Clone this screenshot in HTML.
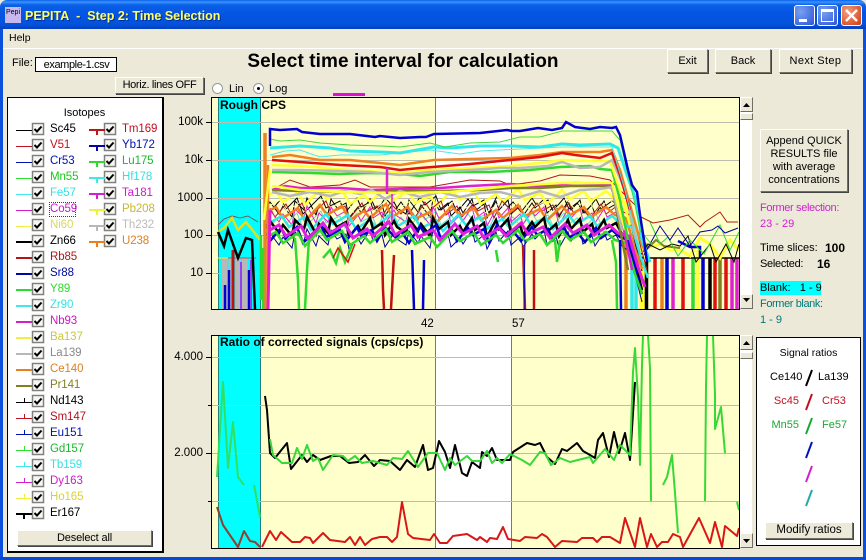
<!DOCTYPE html>
<html><head><meta charset="utf-8"><style>
html,body{margin:0;padding:0}
body{width:866px;height:560px;overflow:hidden;position:relative;background:#ECE9D8;font:11px "Liberation Sans",sans-serif;color:#000}
div,span{position:absolute;white-space:nowrap}
.b{background:#ECE9D8;border:1px solid;border-color:#fff #716F64 #716F64 #fff;box-shadow:1px 1px 0 #444;text-align:center;box-sizing:border-box}
.t{line-height:16px;height:16px}
.sb{position:absolute;left:740px;width:12px;background:#fff}
.ar{left:740px;width:13px;height:15px;background:#ECE9D8;border:1px solid;border-color:#fff #716F64 #716F64 #fff;box-sizing:border-box}
.g{font-size:11.5px;line-height:14px}
</style></head><body>
<svg width="0" height="0" style="position:absolute"><defs>
<path id="ck" d="M2.500 6 L5 8.500 L9.500 3.500" fill="none" stroke="#000" stroke-width="2"/>
<path id="nA" fill="none" d="M265 0L270 9 281-4 286 6 297-5 303 11 313 1 321-7 326 5 340-2 345 10 357-5 361 4 372-2 377 9 385-5 396 6 401-1 409 11 420-6 425 2 436-7 441 7 452-2 457 9 468-4 473 3 484-3 489 10 497-7 508 4 513-1 521 9 532-5 537 3 548-3 553 8 564-5 569 6 577 0 585 10 596-4 601 6 612-2 620 5 628 8 636 40 642 62"/>
<path id="nB" fill="none" d="M265 3L270-5 279 7 283-1 292 10 295-6 304 3 307-9 316 8 319-2 328 7 331-8 337 1 346-4 349 11 358 0 361 6 370-8 373 3 382-3 385 9 394-5 397 1 406 7 409-7 418 5 421-2 430 10 433-8 439 3 448-4 451 9 460 0 463 6 472-8 475 4 484-3 487 11 496-6 499 3 508-7 511 7 520-1 523 9 532-4 535 1 544-8 547 6 556-2 559 10 568-6 571 3 580-7 583 6 592-2 595 8 604-6 607 2 616-3 622 8 630 14 637 44 642 64"/>
<path id="nC" fill="none" d="M265 0L276-6 283 5 298-5 305 8 320-8 327 2 342-7 350 7 364-2 370 5 386-9 392 4 408-6 415 6 430-1 437 9 452-7 460 3 474-5 481 7 496-3 503 5 518-8 525 3 540-4 547 7 562-7 570 2 584-6 591 4 606-6 615 2 626 5 635 36 642 56"/>
</defs></svg>

<!-- title bar -->
<div style="left:0;top:0;width:866px;height:29px;border-radius:7px 7px 0 0;background:linear-gradient(#0A5FE8 0,#3A93FF 2px,#0A60E6 5px,#0554E4 14px,#0453DC 24px,#0240C0 29px)"></div>
<div style="left:5px;top:7px;width:16px;height:16px;background:#C8B8F0;font-size:7px;line-height:12px;color:#000;text-align:center">Pepi</div>
<div style="left:25px;top:7px;font:bold 12.5px/18px 'Liberation Sans',sans-serif;color:#FFFF66;text-shadow:1px 1px 0 #0030A0">PEPITA&nbsp; -&nbsp; Step 2: Time Selection</div>
<div style="left:794px;top:5px;width:21px;height:21px;border-radius:3px;border:1px solid #fff;box-sizing:border-box;background:radial-gradient(circle at 30% 30%,#7AA0F0,#2A55D8)"><div style="left:4px;top:13px;width:8px;height:3px;background:#fff"></div></div>
<div style="left:817px;top:5px;width:21px;height:21px;border-radius:3px;border:1px solid #fff;box-sizing:border-box;background:radial-gradient(circle at 30% 30%,#7AA0F0,#2A55D8)"><div style="left:3px;top:3px;width:13px;height:13px;border:1px solid #fff;border-top:3px solid #fff;box-sizing:border-box"></div></div>
<div style="left:841px;top:5px;width:21px;height:21px;border-radius:3px;border:1px solid #fff;box-sizing:border-box;background:radial-gradient(circle at 30% 30%,#F0A080,#D03A10)"><svg style="position:absolute;left:3px;top:3px" width="13" height="13"><path d="M1 1L12 12M12 1L1 12" stroke="#fff" stroke-width="2.400"/></svg></div>
<!-- window border -->
<div style="left:0;top:29px;width:3px;height:531px;background:#0A50DC"></div>
<div style="left:863px;top:29px;width:3px;height:531px;background:#0A50DC"></div>
<div style="left:0;top:557px;width:866px;height:3px;background:#0A48D0"></div>
<!-- menu -->
<div style="left:9px;top:30px;font-size:10.5px" class="t">Help</div>
<div style="left:3px;top:48px;width:860px;height:1px;background:#fff"></div>
<!-- header row -->
<div style="left:12px;top:55px" class="t">File:</div>
<div style="left:35px;top:57px;width:82px;height:15px;box-sizing:border-box;background:#fff;border:1px solid #000;text-align:center;line-height:14px;letter-spacing:-.4px;padding-left:1px">example-1.csv</div>
<div style="left:204px;top:50px;width:398px;text-align:center;font:bold 19px/24px 'Liberation Sans',sans-serif;letter-spacing:.08px">Select time interval for calculation</div>
<div class="b" style="left:667px;top:49px;width:41px;height:24px;line-height:22px">Exit</div>
<div class="b" style="left:715px;top:49px;width:56px;height:24px;line-height:22px">Back</div>
<div class="b" style="left:779px;top:49px;width:73px;height:24px;line-height:22px;letter-spacing:.4px">Next Step</div>
<div class="b" style="left:115px;top:77px;width:89px;height:17px;line-height:15px;letter-spacing:-.35px">Horiz. lines OFF</div>
<div style="left:212px;top:83px;width:11px;height:11px;border-radius:50%;background:#fff;border:1px solid #999;box-sizing:border-box"></div>
<div style="left:229px;top:81px" class="t">Lin</div>
<div style="left:253px;top:83px;width:11px;height:11px;border-radius:50%;background:#fff;border:1px solid #999;box-sizing:border-box"><div style="left:3px;top:3px;width:3px;height:3px;border-radius:50%;background:#000"></div></div>
<div style="left:269px;top:81px" class="t">Log</div>
<div style="left:333px;top:93px;width:32px;height:3px;background:#E010D0"></div>

<!-- isotopes panel -->
<div style="left:7px;top:97px;width:157px;height:456px;box-sizing:border-box;background:#fff;border:1px solid #000;border-right-width:2px;border-bottom-width:2px"></div>
<div style="left:7px;top:105px;width:155px;text-align:center" class="t">Isotopes</div>
<svg style="position:absolute;left:0;top:0" width="170" height="560">
<g fill="#F8F8F2" stroke="#808080" stroke-width="1.500">
<rect x="32.500" y="123.500" width="11" height="11"/><rect x="32.500" y="139.500" width="11" height="11"/><rect x="32.500" y="155.500" width="11" height="11"/><rect x="32.500" y="171.500" width="11" height="11"/><rect x="32.500" y="187.500" width="11" height="11"/><rect x="32.500" y="203.500" width="11" height="11"/><rect x="32.500" y="219.500" width="11" height="11"/><rect x="32.500" y="235.500" width="11" height="11"/><rect x="32.500" y="251.500" width="11" height="11"/><rect x="32.500" y="267.500" width="11" height="11"/><rect x="32.500" y="283.500" width="11" height="11"/><rect x="32.500" y="299.500" width="11" height="11"/><rect x="32.500" y="315.500" width="11" height="11"/><rect x="32.500" y="331.500" width="11" height="11"/><rect x="32.500" y="347.500" width="11" height="11"/><rect x="32.500" y="363.500" width="11" height="11"/><rect x="32.500" y="379.500" width="11" height="11"/><rect x="32.500" y="395.500" width="11" height="11"/><rect x="32.500" y="411.500" width="11" height="11"/><rect x="32.500" y="427.500" width="11" height="11"/><rect x="32.500" y="443.500" width="11" height="11"/><rect x="32.500" y="459.500" width="11" height="11"/><rect x="32.500" y="475.500" width="11" height="11"/><rect x="32.500" y="491.500" width="11" height="11"/><rect x="32.500" y="507.500" width="11" height="11"/>
<rect x="104.500" y="123.500" width="11" height="11"/><rect x="104.500" y="139.500" width="11" height="11"/><rect x="104.500" y="155.500" width="11" height="11"/><rect x="104.500" y="171.500" width="11" height="11"/><rect x="104.500" y="187.500" width="11" height="11"/><rect x="104.500" y="203.500" width="11" height="11"/><rect x="104.500" y="219.500" width="11" height="11"/><rect x="104.500" y="235.500" width="11" height="11"/>
</g>
<g>
<use href="#ck" x="32" y="123"/><use href="#ck" x="32" y="139"/><use href="#ck" x="32" y="155"/><use href="#ck" x="32" y="171"/><use href="#ck" x="32" y="187"/><use href="#ck" x="32" y="203"/><use href="#ck" x="32" y="219"/><use href="#ck" x="32" y="235"/><use href="#ck" x="32" y="251"/><use href="#ck" x="32" y="267"/><use href="#ck" x="32" y="283"/><use href="#ck" x="32" y="299"/><use href="#ck" x="32" y="315"/><use href="#ck" x="32" y="331"/><use href="#ck" x="32" y="347"/><use href="#ck" x="32" y="363"/><use href="#ck" x="32" y="379"/><use href="#ck" x="32" y="395"/><use href="#ck" x="32" y="411"/><use href="#ck" x="32" y="427"/><use href="#ck" x="32" y="443"/><use href="#ck" x="32" y="459"/><use href="#ck" x="32" y="475"/><use href="#ck" x="32" y="491"/><use href="#ck" x="32" y="507"/>
<use href="#ck" x="104" y="123"/><use href="#ck" x="104" y="139"/><use href="#ck" x="104" y="155"/><use href="#ck" x="104" y="171"/><use href="#ck" x="104" y="187"/><use href="#ck" x="104" y="203"/><use href="#ck" x="104" y="219"/><use href="#ck" x="104" y="235"/>
</g>
<g fill="none" stroke-width="1">
<path d="M16 130.500H32" stroke="#000"/><path d="M16 146.500H32" stroke="#C01020"/><path d="M16 162.500H32" stroke="#0010B0"/><path d="M16 178.500H32" stroke="#30E030"/><path d="M16 194.500H32" stroke="#40E8E8"/><path d="M16 210.500H32" stroke="#D020D0"/><path d="M16 226.500H32" stroke="#F0F040"/>
<path d="M16 242H32" stroke="#000" stroke-width="2"/><path d="M16 258H32" stroke="#B01818" stroke-width="2"/><path d="M16 274H32" stroke="#0008A0" stroke-width="2"/><path d="M16 290H32" stroke="#30D830" stroke-width="2"/><path d="M16 306H32" stroke="#40E8E8" stroke-width="2"/><path d="M16 322H32" stroke="#D020D0" stroke-width="2"/><path d="M16 338H32" stroke="#F0F040" stroke-width="2"/><path d="M16 354H32" stroke="#B8B8B8" stroke-width="2"/><path d="M16 370H32" stroke="#E88020" stroke-width="2"/><path d="M16 386H32" stroke="#808020" stroke-width="2"/>
<path d="M16 402.500H32M24.500 398V402" stroke="#000"/><path d="M16 418.500H32M24.500 414V418" stroke="#C01020"/><path d="M16 434.500H32M24.500 430V434" stroke="#0010B0"/><path d="M16 450.500H32M24.500 446V450" stroke="#30E030"/><path d="M16 466.500H32M24.500 462V466" stroke="#40E8E8"/><path d="M16 482.500H32M24.500 478V482" stroke="#D020D0"/><path d="M16 498.500H32M24.500 494V498" stroke="#F0F040"/>
<path d="M16 514H32M24 514V519" stroke="#000" stroke-width="2"/>
<path d="M89 130H105M97 130V135" stroke="#B81818" stroke-width="2"/><path d="M89 146H105M97 146V151" stroke="#0008A0" stroke-width="2"/><path d="M89 162H105M97 162V167" stroke="#30D830" stroke-width="2"/><path d="M89 178H105M97 178V183" stroke="#40E8E8" stroke-width="2"/><path d="M89 194H105M97 194V199" stroke="#D020D0" stroke-width="2"/><path d="M89 210H105M97 210V215" stroke="#F0F040" stroke-width="2"/><path d="M89 226H105M97 226V231" stroke="#B8B8B8" stroke-width="2"/><path d="M89 242H105M97 242V247" stroke="#E88020" stroke-width="2"/>
</g></svg>
<div style="left:49px;top:202px;width:27px;height:15px;border:1px dotted #060;box-sizing:border-box"></div>
<div style="left:0;top:0;font-size:11.5px;letter-spacing:-.1px">
<div class="t" style="left:50px;top:121px">Sc45</div>
<div class="t" style="left:50px;top:137px;color:#C01020">V51</div>
<div class="t" style="left:50px;top:153px;color:#0010B0">Cr53</div>
<div class="t" style="left:50px;top:169px;color:#18C818">Mn55</div>
<div class="t" style="left:50px;top:185px;color:#38E0E0">Fe57</div>
<div class="t" style="left:50px;top:201px;color:#C818C8">Co59</div>
<div class="t" style="left:50px;top:217px;color:#D8D860">Ni60</div>
<div class="t" style="left:50px;top:233px">Zn66</div>
<div class="t" style="left:50px;top:249px;color:#B01818">Rb85</div>
<div class="t" style="left:50px;top:265px;color:#0008A0">Sr88</div>
<div class="t" style="left:50px;top:281px;color:#30D830">Y89</div>
<div class="t" style="left:50px;top:297px;color:#38E0E0">Zr90</div>
<div class="t" style="left:50px;top:313px;color:#C818C8">Nb93</div>
<div class="t" style="left:50px;top:329px;color:#C8C840">Ba137</div>
<div class="t" style="left:50px;top:345px;color:#888">La139</div>
<div class="t" style="left:50px;top:361px;color:#E08020">Ce140</div>
<div class="t" style="left:50px;top:377px;color:#808020">Pr141</div>
<div class="t" style="left:50px;top:393px">Nd143</div>
<div class="t" style="left:50px;top:409px;color:#B81020">Sm147</div>
<div class="t" style="left:50px;top:425px;color:#0010B0">Eu151</div>
<div class="t" style="left:50px;top:441px;color:#18B830">Gd157</div>
<div class="t" style="left:50px;top:457px;color:#38E0E0">Tb159</div>
<div class="t" style="left:50px;top:473px;color:#D018D0">Dy163</div>
<div class="t" style="left:50px;top:489px;color:#D8D040">Ho165</div>
<div class="t" style="left:50px;top:505px">Er167</div>
<div class="t" style="left:122px;top:121px;color:#C01020">Tm169</div>
<div class="t" style="left:122px;top:137px;color:#0010B0">Yb172</div>
<div class="t" style="left:122px;top:153px;color:#18B830">Lu175</div>
<div class="t" style="left:122px;top:169px;color:#38E0E0">Hf178</div>
<div class="t" style="left:122px;top:185px;color:#D018D0">Ta181</div>
<div class="t" style="left:122px;top:201px;color:#C8B830">Pb208</div>
<div class="t" style="left:122px;top:217px;color:#BBB">Th232</div>
<div class="t" style="left:122px;top:233px;color:#E08020">U238</div>
</div>
<div class="b" style="left:17px;top:530px;width:135px;height:16px;line-height:14px;letter-spacing:-.15px">Deselect all</div>

<!-- axis labels top -->
<div class="g" style="left:166px;top:115px;width:37px;text-align:right">100k</div>
<div class="g" style="left:166px;top:153px;width:37px;text-align:right">10k</div>
<div class="g" style="left:166px;top:191px;width:37px;text-align:right">1000</div>
<div class="g" style="left:166px;top:228px;width:37px;text-align:right">100</div>
<div class="g" style="left:166px;top:266px;width:37px;text-align:right">10</div>
<div class="g" style="left:421px;top:317px">42</div>
<div class="g" style="left:512px;top:317px">57</div>
<div class="g" style="left:166px;top:350px;width:37px;text-align:right">4.000</div>
<div class="g" style="left:166px;top:446px;width:37px;text-align:right">2.000</div>
<svg style="position:absolute;left:200px;top:100px" width="12" height="420"><path d="M6 22.500H12M6 60.500H12M6 98.500H12M6 135.500H12M6 173.500H12M6 257.500H12M8 305.500H12M6 353.500H12M8 401.500H12" stroke="#000" stroke-width="1"/></svg>

<!-- top chart -->
<svg style="position:absolute;left:211px;top:97px;background:#FFFFCC;border:0" width="529" height="213" viewBox="211 97 529 213">
<rect x="218" y="97" width="43" height="213" fill="#00FFFF"/>
<rect x="435" y="97" width="76" height="213" fill="#fff"/>
<path d="M218.500 97V310M260.500 97V310" stroke="#208080"/>
<path d="M435.500 97V310M511.500 97V310" stroke="#808040"/>
<path d="M212 122.500H739M212 160.500H739M212 198.500H739M212 235.500H739M212 273.500H739" stroke="#BDBDAD"/>
<!-- tail bars -->
<g fill="none" stroke-width="3.500">
<path d="M626 240V309M662 258V309" stroke="#E88020"/>
<path d="M632 240V309M636 250V309" stroke="#30E8E8"/>
<path d="M641 245V309M644 250V309M698 250V309" stroke="#FFFF33"/>
<path d="M646.500 258V309M710 258V309" stroke="#000"/>
<path d="M655 258V309M683 258V309M715 258V309M726 258V309" stroke="#E01010"/>
<path d="M667 258V309M703 258V309" stroke="#0000D0"/>
<path d="M673 258V309M732 258V309M737 258V309" stroke="#E020D0"/>
<path d="M693 258V309" stroke="#30D830"/>
<path d="M720 258V309" stroke="#808020"/>
<path d="M640 258H739" stroke="#000" stroke-width="1.500"/>
<path d="M628 228L640 240 650 247 660 244 670 250 680 250 690 256 700 238 710 244 720 258 730 240 739 250" stroke="#FFFF33" stroke-width="3"/>
<path d="M638 232L648 248 656 240 664 246 680 248" stroke="#808020" stroke-width="2"/>
<path d="M632 240L640 256 648 244 660 250 672 244 680 246 688 236 696 262 710 244 716 262 726 244 734 262 739 244" stroke="#000" stroke-width="1"/>
<path d="M678 241L690 247H700V257" stroke="#0000D0" stroke-width="2.500"/>
<path d="M650 222L660 244 668 237 678 256 690 240 704 254 720 225 730 250 739 232" stroke="#30D830" stroke-width="1"/>
<path d="M637 215L653 223 670 220 688 215 700 227 705 222 720 212 727 222 738 222" stroke="#B01818" stroke-width="1"/>
<path d="M640 262L650 244 660 226 670 240 678 228 690 246 700 232 712 230 718 226 725 233 738 228" stroke="#0000A0" stroke-width="1"/>
</g>
<!-- left cyan noise -->
<g fill="none">
<path d="M224.500 258V309M231 258V309M238 258V309" stroke="#B8B8B8" stroke-width="5"/>
<path d="M245 258V309" stroke="#B8B8B8" stroke-width="6"/>
<path d="M228 258H256" stroke="#A06060" stroke-width="1"/>
<path d="M225 285V309M229 270V309M249 270V309" stroke="#0000D0" stroke-width="2.500"/>
<path d="M233 250V309" stroke="#C01010" stroke-width="3"/>
<path d="M251 260V309M241 262V309" stroke="#9040F0" stroke-width="2"/>
<path d="M218 225L224 219 232 216 240 218 248 216 258 222" stroke="#606060" stroke-width="1"/>
<path d="M218 232L224 228 232 218 238 230 246 222 254 232 260 240" stroke="#E0E020" stroke-width="2.500"/>
<path d="M218 232L224 246 228 230 238 258 246 238 252 240 255 309" stroke="#000" stroke-width="2.500"/>
<path d="M218 258H228" stroke="#F0F040" stroke-width="1"/>
</g>
<!-- noise bands -->
<g stroke-width="1" stroke="#000"><use href="#nA" y="203"/><use href="#nB" y="207"/></g>
<use href="#nC" y="197" stroke="#FFFF33" stroke-width="2.500"/>
<g><use href="#nC" y="206" x="4" stroke="#FFFFA0" stroke-width="1"/><use href="#nA" y="218" stroke="#60E0D0" stroke-width="1"/><use href="#nA" y="208" x="5" stroke="#B01818" stroke-width="1"/><use href="#nB" y="215" stroke="#E020D0" stroke-width="1"/></g>
<use href="#nC" y="213" stroke="#F08020" stroke-width="2.500"/>
<use href="#nC" y="222" x="6" stroke="#30E8E8" stroke-width="2.500"/>
<use href="#nB" y="226" stroke="#000" stroke-width="2.500"/>
<use href="#nA" y="232" stroke="#0000D0" stroke-width="2.500"/>
<use href="#nB" y="238" stroke="#0000A0" stroke-width="1"/>
<use href="#nC" y="238" stroke="#30D830" stroke-width="2.500"/>
<use href="#nC" y="231" x="3" stroke="#E020E0" stroke-width="3"/>
<!-- plateaus -->
<g fill="none">
<path d="M272 190L290 180 310 187 340 185 355 180 370 187 400 187 430 187 470 180 500 181 510 185 540 181 560 175 590 176 610 180 620 190 635 205 640 215" stroke="#B01818"/>
<path d="M272 190L285 186 300 188 340 188 370 190 400 189 440 188 470 186 510 184 540 186 575 183 610 184 620 210 628 250 632 270" stroke="#E020D0" stroke-width="2.500"/>
<path d="M272 190L300 191 340 192 370 192 400 191 440 191 480 190 510 188 540 188 570 186 612 186 622 240 628 270" stroke="#808020" stroke-width="2.500"/>
<path d="M272 192L290 196 310 192 330 196 345 191 360 194 372 190 385 199 400 191 420 197 440 192 460 197 480 193 500 192 520 197 540 191 560 197 580 190 600 189 612 187 622 230" stroke="#B8B8B8" stroke-width="2.500"/>
<path d="M272 186L300 190 340 192 400 193 450 192 510 186 562 183 612 183 625 230" stroke="#FFFF33" stroke-width="2.500"/>
<path d="M272 172L310 173 340 174 370 173 400 174 420 176 450 172 490 172 530 170 560 167 590 166 600 169 612 170 620 200 628 240" stroke="#30D830" stroke-width="2.500"/>
<path d="M272 165L300 166 350 170 400 173 430 170 470 168 510 166 540 163 562 160 590 161 610 161 620 190 630 225" stroke="#FFFF33" stroke-width="2.500"/>
<path d="M272 170L300 170 340 171 370 172 400 175 430 172 470 170 500 168 520 168 548 166 562 162 580 168 600 167 612 160 625 190 636 240" stroke="#B8B8B8" stroke-width="2.500"/>
<path d="M272 157L290 155 320 160 350 160 380 163 400 165 434 160 470 159 510 158 540 155 562 152 600 152 612 150 620 170 630 205 640 240 650 262" stroke="#F08020" stroke-width="2.500"/>
<path d="M272 160L300 162 340 165 380 167 400 170 420 168 470 164 500 161 540 157 562 153 575 155 600 158 612 153 620 175 630 210" stroke="#E01010" stroke-width="2.500"/>
<path d="M270 155L285 151 300 150 320 157 340 155 380 155 430 150 460 154 480 151 520 149 562 147 612 147 625 190 640 250" stroke="#50E8E8" stroke-width="1"/>
<path d="M270 148L300 146 330 148 350 151 380 152 400 153 434 147 450 148 480 146 510 146 540 147 562 144 580 145 610 144 618 148 627 175 636 200 642 240 650 262" stroke="#30E8E8" stroke-width="3"/>
<path d="M270 139L280 141 300 140 320 143 350 145 380 146 400 147 430 143 445 147 470 143 500 142 520 137 540 137 562 131 600 131 612 131 620 140 628 175 634 200 640 230 652 245" stroke="#40D840" stroke-width="1"/>
<path d="M270 146V129L280 130 297 129 302 132 320 134 350 134 375 137 380 136 400 138 420 137 426 137 434 134 480 133 507 130 512 131 520 131 538 128 552 130 562 128 566 122 575 127 590 129 600 127 612 128 616 127 620 135 628 170 632 185 637 192 640 215 644 240 647 262" stroke="#0000D0" stroke-width="2.500"/>
<path d="M387 168V194" stroke="#E020D0" stroke-width="2.500"/>
<path d="M392 194V222" stroke="#E020D0" stroke-width="1.500"/>
<path d="M265 133V309" stroke="#F08020" stroke-width="3.500"/>
<path d="M261 235V300M263 248V309" stroke="#30D830" stroke-width="2.500"/>
<path d="M268 165V309" stroke="#E88020" stroke-width="2.500"/>
<path d="M270 210L269 262 268 309" stroke="#E020D0" stroke-width="3"/>
<path d="M270 170L264 220" stroke="#FFFF33" stroke-width="2.500"/>
<path d="M295 238L298 280 299 309M305 309L307 270 309 240" stroke="#30D830" stroke-width="2.500"/>
<path d="M382 250L383 290 384 309M391 309L392 290 394 255" stroke="#C01010" stroke-width="2.500"/>
<path d="M412 250L414 309M423 309L424 260" stroke="#0000D0" stroke-width="2.500"/>
<path d="M523 245L525 309M534 309V250" stroke="#C01010" stroke-width="2.500"/>
<path d="M525 240L524 309" stroke="#0000D0" stroke-width="1"/>
<path d="M612 240L616 262 617 309" stroke="#30D830" stroke-width="2.500"/>
<path d="M620 240L621 309" stroke="#0000D0" stroke-width="2.500"/>
<path d="M323 258L330 250 336 263 340 248 345 262 352 245" stroke="#30D830" stroke-width="2.500"/>
<path d="M333 258L338 248 348 262 355 244" stroke="#E01010" stroke-width="1.500"/>
<path d="M555 240L557 262 560 240M496 250L498 262" stroke="#30D830" stroke-width="2.500"/>
</g>
<path d="M211.500 97.500H739.500V309.500H211.500Z" fill="none" stroke="#000"/>
</svg>
<div style="left:220px;top:98px;font:bold 12px/15px 'Liberation Sans',sans-serif">Rough CPS</div>

<!-- bottom chart -->
<svg style="position:absolute;left:211px;top:335px;background:#FFFFCC" width="529" height="214" viewBox="211 335 529 214">
<rect x="218" y="335" width="43" height="214" fill="#00FFFF"/>
<rect x="435" y="335" width="76" height="214" fill="#fff"/>
<path d="M218.500 335V549M260.500 335V549" stroke="#208080"/>
<path d="M435.500 335V549M511.500 335V549" stroke="#808040"/>
<path d="M212 357.500H739M212 405.500H739M212 453.500H739M212 501.500H739" stroke="#BDBDAD"/>
<g fill="none" stroke-width="2" stroke-linejoin="round">
<path d="M262 547L270 531 276 540 281 532 292 542 300 542 305 537 310 538 313 543 323 533 330 540 345 542 350 537 355 545 360 537 365 545 372 539 380 537 387 537 392 542 397 537 402 502 408 534 413 538 430 540 434 534 440 543 447 543 453 536 467 534 477 540 480 537 487 542 490 538 497 539 503 527 508 539 520 541 525 537 537 538 542 534 547 537 555 547 562 541 577 542 582 538 593 538 597 542 602 537 610 537 620 543 625 518 635 547 640 518 647 547 651 534 657 547 662 542 668 542 673 534 680 537 683 547 699 518 710 543 715 522 722 547 725 526 737 536 739 528" stroke="#D81818"/>
<path d="M217 507L223 525 238 547 244 531 250 541 255 542 260 547" stroke="#904030"/>
<path d="M265 396L267 410 270 453 275 458 287 443 291 469 302 455 307 462 313 455 320 460 331 456 340 456 349 463 358 462 365 455 374 466 380 460 390 461 400 470 407 460 415 467 423 445 428 470 433 468 439 441 445 452 450 468 455 445 462 473 467 476 472 462 480 468 482 452 487 456 492 448 497 460 510 460 513 452 527 443 535 445 540 443 547 457 555 464 562 449 567 451 577 443 583 451 590 455 595 458 598 440 603 433 609 457 614 432 619 453 625 433 630 460 635 382" stroke="#000"/>
<path d="M270 439L273 455 282 463 292 463 297 448 302 459 307 445 313 461 318 458 323 470 333 455 343 456 348 461 355 456 362 463 373 461 387 465 393 458 402 459 408 451 418 467 428 453 437 453 445 470 450 458 455 465 467 456 472 461 480 461 487 451 492 463 497 458 502 463 510 454 522 460 530 465 540 452 545 453 551 465 560 458 570 462 590 457 593 463 605 449 614 460 620 445 630 455 633 372 635 348 638 397 640 465 642 365 643 335M648 335L650 368 651 501M663 485L667 477 672 455 675 493 678 533M705 501L706 387 707 335M713 335L715 395 715 429 721 407 725 453M737 502L739 510" stroke="#38D838"/>
<path d="M217 477L223 382 228 468 233 422 238 477 244 485M254 485L260 517" stroke="#30E060"/>
</g>
<path d="M211.500 335.500H739.500V548.500H211.500Z" fill="none" stroke="#000"/>
</svg>
<div style="left:220px;top:335px;font:bold 12px/15px 'Liberation Sans',sans-serif">Ratio of corrected signals (cps/cps)</div>

<!-- scrollbars -->
<div class="sb" style="top:97px;height:212px"></div>
<div class="ar" style="top:97px"></div>
<div class="ar" style="top:113px;height:7px"></div>
<div class="ar" style="top:294px"></div>
<div class="sb" style="top:335px;height:213px"></div>
<div class="ar" style="top:335px"></div>
<div class="ar" style="top:352px;height:7px"></div>
<div class="ar" style="top:533px"></div>
<svg style="position:absolute;left:740px;top:97px" width="13" height="452"><path d="M3 10H10L6.500 6ZM3 201H10L6.500 205ZM3 248H10L6.500 244ZM3 442H10L6.500 446Z" fill="#000"/></svg>

<!-- right side -->
<div class="b" style="left:760px;top:129px;width:88px;height:63px;line-height:13px;padding-top:5px">Append QUICK<br>RESULTS file<br>with average<br>concentrations</div>
<div class="t" style="left:760px;top:200px;color:#D020D0;letter-spacing:-.35px">Former selection:</div>
<div class="t" style="left:760px;top:216px;color:#D020D0">23 - 29</div>
<div class="t" style="left:760px;top:240px">Time slices:</div>
<div class="t" style="left:825px;top:240px;font-weight:bold;font-size:12px">100</div>
<div class="t" style="left:760px;top:256px;letter-spacing:-.3px">Selected:</div>
<div class="t" style="left:817px;top:256px;font-weight:bold;font-size:12px">16</div>
<div class="t" style="left:760px;top:281px;width:61px;height:14px;line-height:14px;background:#00FFFF">Blank:&nbsp;&nbsp; 1 - 9</div>
<div class="t" style="left:760px;top:296px;color:#007878;letter-spacing:-.4px">Former blank:</div>
<div class="t" style="left:760px;top:312px;color:#007878">1 - 9</div>

<!-- signal ratios -->
<div style="left:756px;top:337px;width:105px;height:209px;box-sizing:border-box;background:#fff;border:1px solid #000"></div>
<div class="t" style="left:756px;top:345px;width:105px;text-align:center;font-size:10.500px">Signal ratios</div>
<div class="t" style="left:770px;top:369px;width:32px;text-align:right">Ce140</div>
<div class="t" style="left:818px;top:369px">La139</div>
<div class="t" style="left:770px;top:393px;width:29px;text-align:right;color:#C01020">Sc45</div>
<div class="t" style="left:822px;top:393px;color:#C01020">Cr53</div>
<div class="t" style="left:768px;top:417px;width:31px;text-align:right;color:#18A830">Mn55</div>
<div class="t" style="left:822px;top:417px;color:#18A830">Fe57</div>
<svg style="position:absolute;left:800px;top:360px" width="20" height="150"><g stroke-width="2" fill="none"><path d="M6 26L12 10" stroke="#000"/><path d="M6 50L12 34" stroke="#C01020"/><path d="M6 74L12 58" stroke="#18A830"/><path d="M6 98L12 82" stroke="#0010C0"/><path d="M6 122L12 106" stroke="#D020D0"/><path d="M6 146L12 130" stroke="#20A8A8"/></g></svg>
<div class="b" style="left:765px;top:522px;width:88px;height:17px;line-height:15px;font-size:11.500px">Modify ratios</div>
</body></html>
